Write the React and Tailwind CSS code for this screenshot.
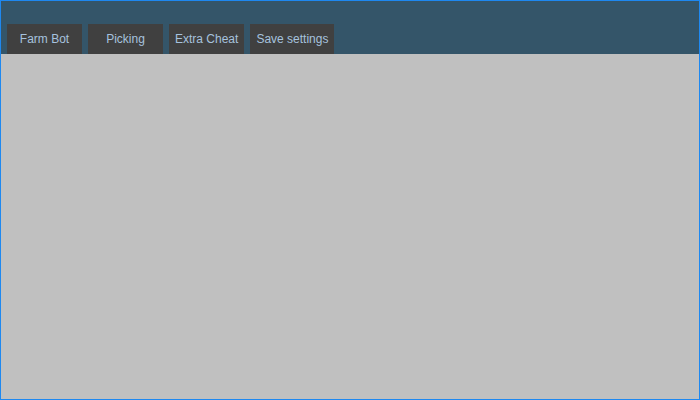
const TABS = ['Farm Bot', 'Picking', 'Extra Cheat', 'Save settings']

export default function App() {
  return (
    <div className="flex h-[400px] w-[700px] flex-col border border-[#1e88f0] bg-[#c0c0c0] font-['Liberation_Sans',Arial,sans-serif]">
      <div className="flex h-[53px] items-end gap-[6px] bg-[#345569] pl-[6px]">
        {TABS.map((t) => (
          <div
            key={t}
            className="flex h-[30px] min-w-[75px] items-center justify-center bg-[#404040] px-[6px] pb-[1px] text-[12px] text-[#a6c2de]"
          >
            {t}
          </div>
        ))}
      </div>
    </div>
  )
}
